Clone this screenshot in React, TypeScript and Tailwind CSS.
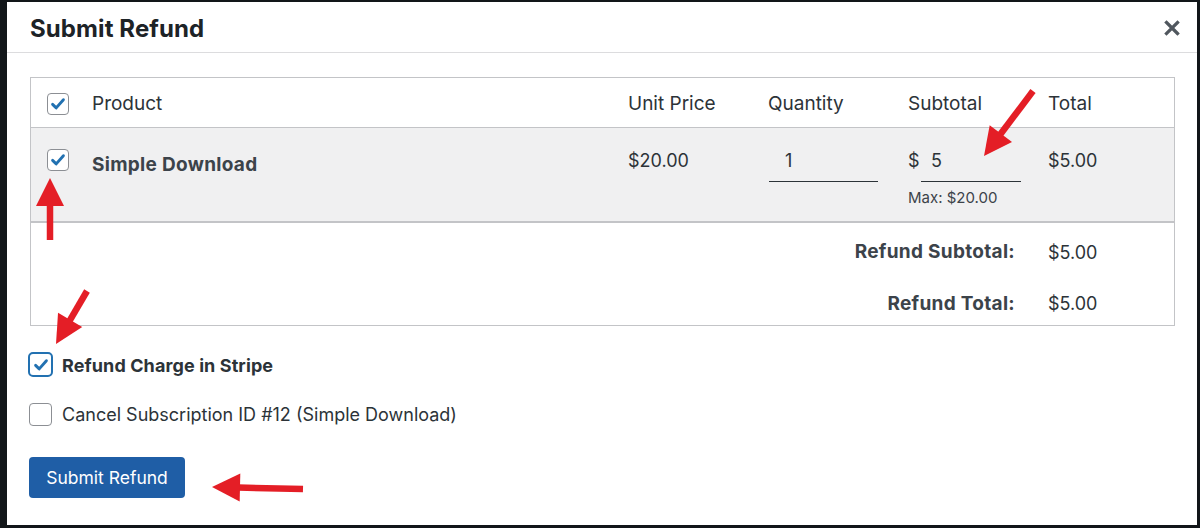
import React from "react";

const FONT = "font-['Inter','Noto_Sans',sans-serif]";

function Check({ size = 22, focused = false, checked = true }: { size?: number; focused?: boolean; checked?: boolean }) {
  const box = focused
    ? "border-2 border-[#2271b1] rounded-[5px]"
    : "border-[1.5px] border-[#8c8f94] rounded-[4px]";
  return (
    <div
      className={`${box} bg-white flex items-center justify-center shrink-0`}
      style={{ width: size, height: size }}
    >
      {checked && (
        <svg viewBox="0 0 20 20" className="w-[18px] h-[18px]">
          <path d="M4 10.4 L8 14.3 L16 5.2" fill="none" stroke="#2271b1" strokeWidth="3.2" strokeLinecap="round" strokeLinejoin="round" />
        </svg>
      )}
    </div>
  );
}

// red annotation arrows drawn over the dialog
const ARROWS = [
  { x1: 1033, y1: 91, x2: 984, y2: 156 },
  { x1: 50, y1: 240, x2: 50, y2: 178 },
  { x1: 87, y1: 291, x2: 56, y2: 344 },
  { x1: 303, y1: 489, x2: 212, y2: 487 },
];

function Arrow({ x1, y1, x2, y2 }: { x1: number; y1: number; x2: number; y2: number }) {
  const dx = x2 - x1;
  const dy = y2 - y1;
  const len = Math.hypot(dx, dy);
  const ux = dx / len;
  const uy = dy / len;
  const headLen = 28;
  const headW = 14;
  const bx = x2 - ux * headLen;
  const by = y2 - uy * headLen;
  const pts = `${x2},${y2} ${bx - uy * headW},${by + ux * headW} ${bx + uy * headW},${by - ux * headW}`;
  return (
    <g>
      <line x1={x1} y1={y1} x2={bx + ux * 2} y2={by + uy * 2} stroke="#e41e26" strokeWidth="6.5" />
      <polygon points={pts} fill="#e41e26" />
    </g>
  );
}

const COLS = "grid grid-cols-[61px_536px_140px_140px_140px_1fr]";

export default function App() {
  return (
    <div className={`relative w-[1200px] h-[528px] bg-[#121619] pl-[7px] pt-[2px] pr-[3px] pb-[3px] ${FONT}`}>
      <div className="bg-white h-full flex flex-col">
        <div className="h-[51px] shrink-0 border-b border-[#dcdcde] flex items-center justify-between pl-[23px] pr-[17px]">
          <h1 className="text-[24px] font-bold text-[#1d2327] tracking-[0.1px] mt-[3px]">Submit Refund</h1>
          <svg viewBox="0 0 16 16" className="w-[16px] h-[16px] mt-[2px]">
            <path d="M2.5 2.5 L13.5 13.5 M13.5 2.5 L2.5 13.5" stroke="#50575e" strokeWidth="3.2" strokeLinecap="square" />
          </svg>
        </div>

        <div className="pl-[23px] pr-[22px] pt-[24px] text-[#2c3338]">
          <div className="border border-[#c3c4c7]">
            <div className={`${COLS} h-[50px] items-center border-b border-[#c3c4c7] text-[19px]`}>
              <div className="pl-[16px] pt-[2px]"><Check /></div>
              <div className="pt-[3px]">Product</div>
              <div className="pt-[3px]">Unit Price</div>
              <div className="pt-[3px]">Quantity</div>
              <div className="pt-[3px]">Subtotal</div>
              <div className="pt-[3px]">Total</div>
            </div>

            <div className={`${COLS} h-[95px] items-start pt-[21px] bg-[#f0f0f1] border-b-2 border-[#c3c4c7] text-[18px]`}>
              <div className="pl-[16px]"><Check /></div>
              <div className="font-bold text-[19px] tracking-[0.3px] leading-[28px] pt-[2px] text-[#3c434a]">Simple Download</div>
              <div className="leading-[24px]">$20.00</div>
              <div>
                <div className="w-[109px] h-[33px] ml-[1px] border-b-[1.5px] border-[#2c3338] pl-[16px] leading-[24px]">1</div>
              </div>
              <div className="flex flex-col">
                <div className="flex items-start">
                  <span className="leading-[24px] w-[13px]">$</span>
                  <div className="w-[100px] h-[33px] border-b-[1.5px] border-[#2c3338] pl-[10px] leading-[24px]">5</div>
                </div>
                <div className="text-[15px] leading-[20px] mt-[6px] text-[#3c434a]">Max: $20.00</div>
              </div>
              <div className="leading-[24px]">$5.00</div>
            </div>

            <div className="pt-[4px] text-[18px]">
              <div className={`${COLS} h-[50px] items-center`}>
                <div className="col-span-5 text-right pr-[33px] font-bold text-[19px] tracking-[0.3px] text-[#3c434a]">Refund Subtotal:</div>
                <div>$5.00</div>
              </div>
              <div className={`${COLS} h-[48px] items-start pt-[13px]`}>
                <div className="col-span-5 text-right pr-[33px] font-bold text-[19px] tracking-[0.3px] text-[#3c434a]">Refund Total:</div>
                <div>$5.00</div>
              </div>
            </div>
          </div>

          <div className="mt-[26px] flex items-center gap-[9px] -ml-[2px] h-[25px]">
            <Check size={25} focused />
            <span className="text-[18px] font-bold text-[#2c3338] tracking-[0.1px] pt-[1px]">Refund Charge in Stripe</span>
          </div>

          <div className="mt-[25px] flex items-center gap-[10px] -ml-[1px] h-[24px]">
            <Check size={23} checked={false} />
            <span className="text-[18px] text-[#2c3338] pt-[1px]">Cancel Subscription ID #12 (Simple Download)</span>
          </div>

          <button className="mt-[31px] -ml-[1px] h-[41px] w-[156px] rounded-[4px] bg-[#1f5ea6] text-white text-[17.5px] flex items-center justify-center pt-[1px]">
            Submit Refund
          </button>
        </div>
      </div>

      <svg className="absolute left-0 top-0 w-[1200px] h-[528px] pointer-events-none" viewBox="0 0 1200 528">
        {ARROWS.map((a, i) => (
          <Arrow key={i} {...a} />
        ))}
      </svg>
    </div>
  );
}
